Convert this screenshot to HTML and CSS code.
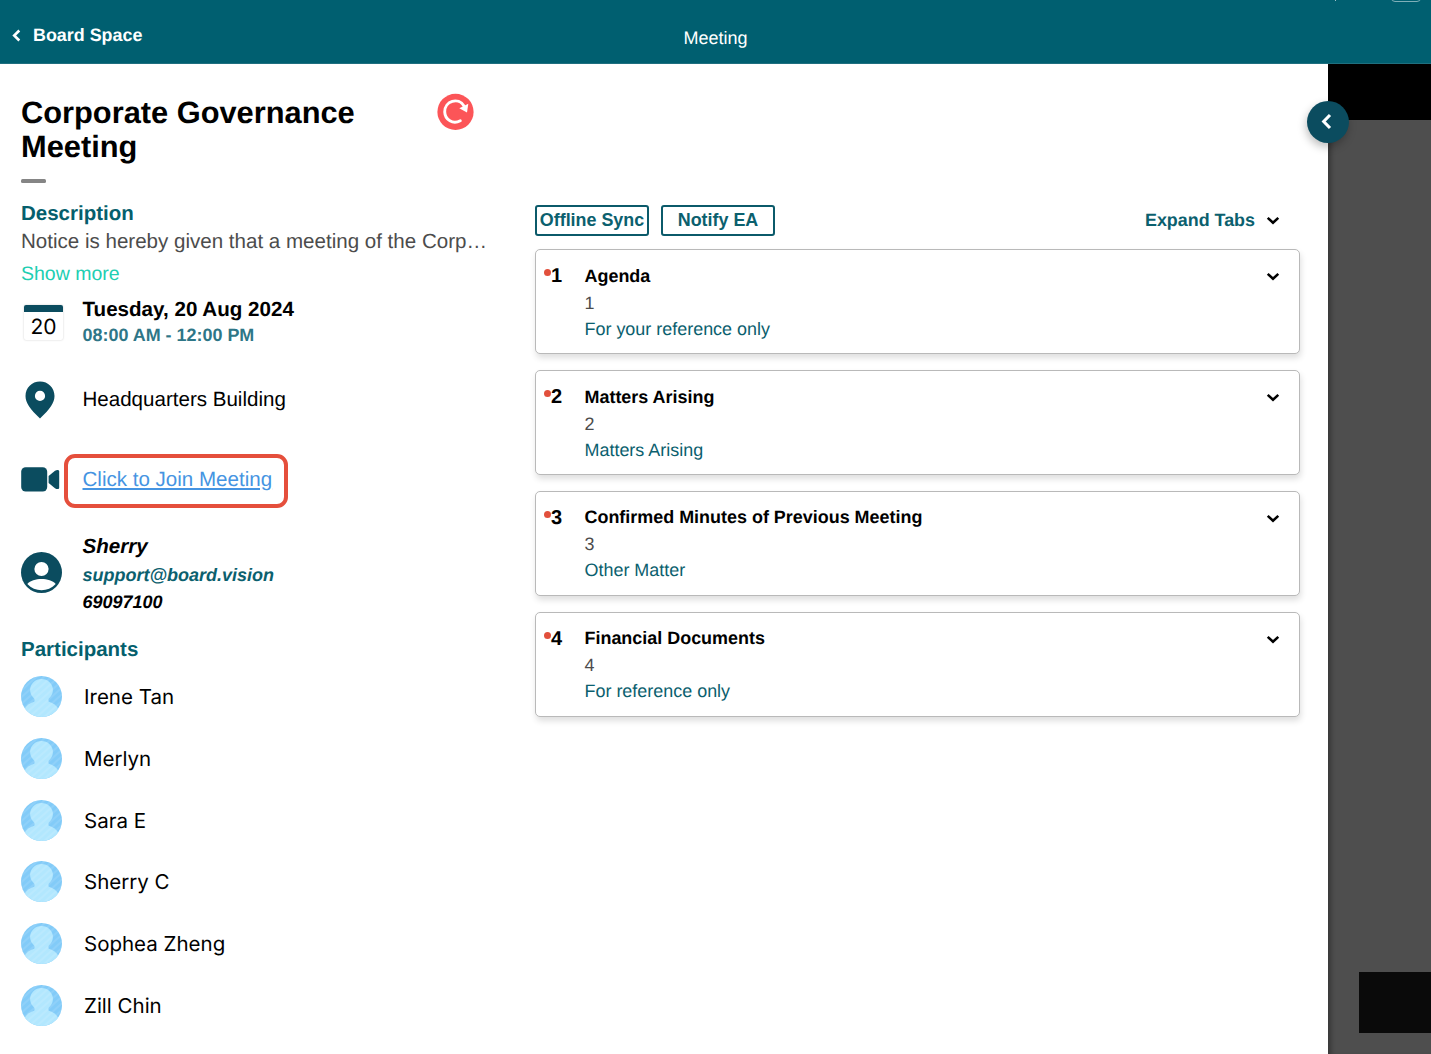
FILE: index.html
```html
<!DOCTYPE html>
<html lang="en">
<head>
<meta charset="utf-8">
<title>Meeting</title>
<link rel="stylesheet" href="styles.css">
</head>
<body>
<svg width="0" height="0" class="defs" aria-hidden="true">
  <defs>
    <clipPath id="round"><circle cx="20.5" cy="20.5" r="20.5"/></clipPath>
    <pattern id="hatch" width="5" height="5" patternUnits="userSpaceOnUse" patternTransform="rotate(-42)">
      <path d="M0 1H5" stroke="#fff" stroke-opacity=".2" stroke-width="1"/>
    </pattern>
    <symbol id="avatar" viewBox="0 0 41 41">
      <g clip-path="url(#round)">
        <rect width="41" height="41" fill="#82cbf8"/>
        <g fill="#b2e7fe">
          <ellipse cx="20.500" cy="14" rx="11.400" ry="11"/>
          <rect x="13.500" y="19" width="14" height="9"/>
          <ellipse cx="20.500" cy="37.500" rx="18" ry="13"/>
        </g>
        <rect width="41" height="41" fill="url(#hatch)"/>
      </g>
    </symbol>
    <symbol id="chevron" viewBox="0 0 14 9">
      <path d="M1.700 1.900L7 6.700L12.300 1.900" fill="none" stroke="#000" stroke-width="2.600"/>
    </symbol>
  </defs>
</svg>

<header class="topbar">
  <a class="back"><svg width="9" height="13" viewBox="0 0 9 13"><path d="M7.300 1.500L2.200 6.500L7.300 11.500" fill="none" stroke="#fff" stroke-width="2.600"/></svg>Board Space</a>
  <span class="topbar-title">Meeting</span>
  <i class="battery"></i><i class="signal"></i>
</header>

<div class="body">
  <main class="sheet">
    <section class="info">
      <div class="title-row">
        <h1>Corporate Governance Meeting</h1>
        <svg class="refresh" width="37" height="37" viewBox="0 0 37 37">
          <circle cx="18.500" cy="18.900" r="18.100" fill="#fc5558"/>
          <path d="M23.300 27.700C16 31.700 8 26.900 7.700 18.900C7.600 7.900 21.500 3.900 27 12.900" fill="none" stroke="#fff" stroke-width="2.900" stroke-linecap="round"/>
          <path d="M22.300 15.300L31.300 10.800L30 19.600Z" fill="#fff"/>
        </svg>
      </div>
      <div class="dash"></div>
      <h2 class="desc-title">Description</h2>
      <p class="desc">Notice is hereby given that a meeting of the Corp…</p>
      <a class="more">Show more</a>

      <div class="row row-date">
        <div class="icon"><div class="calendar">20</div></div>
        <div>
          <div class="date">Tuesday, 20 Aug 2024</div>
          <div class="time">08:00 AM - 12:00 PM</div>
        </div>
      </div>
      <div class="row row-place">
        <div class="icon"><svg class="pin" width="30" height="38" viewBox="0 0 30 38"><path fill-rule="evenodd" d="M15 .5C6.800 .5 .5 6.800 .5 15C.5 21.800 5 28 15 37.500C25 28 29.500 21.800 29.500 15C29.500 6.800 23.200 .5 15 .5ZM15 9.800A5.100 5.100 0 1 1 15 20A5.100 5.100 0 1 1 15 9.800Z" fill="#0b4c5f"/></svg></div>
        <span class="place">Headquarters Building</span>
      </div>
      <div class="row row-join">
        <div class="icon"><svg width="39" height="25" viewBox="0 0 39 25"><rect x=".2" y=".3" width="26" height="24.200" rx="4.500" fill="#0b4c5f"/><path d="M27.600 9L34 3.800C36 2.500 38.200 2.500 38.200 4.500V20.500C38.200 22.500 36 22.500 34 21.200L27.600 16Z" fill="#0b4c5f"/></svg></div>
        <a class="join">Click to Join Meeting</a>
        <div class="highlight"></div>
      </div>
      <div class="row row-contact">
        <div class="icon"><svg width="41" height="41" viewBox="0 0 41 41"><circle cx="20.500" cy="20.500" r="20.500" fill="#0b4c5f"/><circle cx="20.500" cy="17" r="7.100" fill="#fff"/><path d="M6.300 32C12 25.300 29 25.300 34.700 32C27 40.300 14 40.300 6.300 32Z" fill="#fff"/></svg></div>
        <div class="contact">
          <div class="person">Sherry</div>
          <div class="mail">support@board.vision</div>
          <div class="phone">69097100</div>
        </div>
      </div>

      <h2 class="people-title">Participants</h2>
      <ul class="people">
        <li><svg><use href="#avatar"/></svg>Irene Tan</li>
        <li><svg><use href="#avatar"/></svg>Merlyn</li>
        <li><svg><use href="#avatar"/></svg>Sara E</li>
        <li><svg><use href="#avatar"/></svg>Sherry C</li>
        <li><svg><use href="#avatar"/></svg>Sophea Zheng</li>
        <li><svg><use href="#avatar"/></svg>Zill Chin</li>
      </ul>
    </section>

    <section class="tabs">
      <div class="toolbar">
        <button>Offline Sync</button>
        <button>Notify EA</button>
        <a class="expand">Expand Tabs<svg class="chev"><use href="#chevron"/></svg></a>
      </div>
      <article class="card">
        <div class="num">1</div>
        <div class="text"><h3>Agenda</h3><p>1</p><p class="note">For your reference only</p></div>
        <svg class="chev"><use href="#chevron"/></svg>
      </article>
      <article class="card">
        <div class="num">2</div>
        <div class="text"><h3>Matters Arising</h3><p>2</p><p class="note">Matters Arising</p></div>
        <svg class="chev"><use href="#chevron"/></svg>
      </article>
      <article class="card">
        <div class="num">3</div>
        <div class="text"><h3>Confirmed Minutes of Previous Meeting</h3><p>3</p><p class="note">Other Matter</p></div>
        <svg class="chev"><use href="#chevron"/></svg>
      </article>
      <article class="card">
        <div class="num">4</div>
        <div class="text"><h3>Financial Documents</h3><p>4</p><p class="note">For reference only</p></div>
        <svg class="chev"><use href="#chevron"/></svg>
      </article>
    </section>
  </main>
  <aside class="behind">
    <div class="behind-top"></div>
    <div class="behind-block"></div>
    <div class="toggle"><svg width="11" height="17" viewBox="0 0 11 17"><path d="M9 2L2.700 8.500L9 15" fill="none" stroke="#fff" stroke-width="3.100"/></svg></div>
  </aside>
</div>
</body>
</html>
```
FILE: styles.css
```css
* { box-sizing: border-box; }
body {
  margin: 0;
  height: 1054px;
  overflow: hidden;
  display: flex;
  flex-direction: column;
  background: #fff;
  color: #000;
  font-family: "Liberation Sans", Arial, sans-serif;
  font-variant-ligatures: none;
  text-rendering: geometricPrecision;
}
h1, h2, h3, p, ul { margin: 0; padding: 0; }
svg { display: block; flex: none; }
.defs { position: absolute; }

.topbar {
  position: relative;
  flex: none;
  height: 64px;
  background: #005f70;
  border-bottom: 1px solid #1f6f7f;
  color: #fff;
  display: grid;
  grid-template-columns: 1fr auto 1fr;
}
.back {
  display: flex;
  align-items: center;
  gap: 12px;
  height: 24px;
  margin: 23px 0 0 12px;
  font-size: 17.900px;
  font-weight: 700;
}
.topbar-title {
  margin-top: 26px;
  line-height: 24px;
  font-size: 18px;
}
.battery {
  position: absolute;
  top: -10px;
  left: 1391px;
  width: 30px;
  height: 12px;
  border: 1px solid #7fafb8;
  border-radius: 4px;
}
.signal {
  position: absolute;
  top: 0;
  left: 1335px;
  width: 1px;
  height: 1px;
  background: #9fc3c9;
}

.body { flex: 1; display: flex; }
.sheet { width: 1328px; flex: none; display: flex; gap: 21px; background: #fff; }
.info { width: 514px; padding: 32px 0 0 21px; }

.title-row { display: flex; align-items: flex-start; height: 69px; }
h1 {
  width: 416px;
  padding-right: 60px;
  font-size: 30.800px;
  line-height: 34px;
}
.refresh { margin-top: -3px; }
.dash {
  width: 25px;
  height: 4px;
  margin-top: 14px;
  border-radius: 1.500px;
  background: #858585;
}
h2 {
  font-size: 20.500px;
  line-height: 24px;
  color: #055f6d;
}
.desc-title { margin-top: 19px; }
.desc {
  margin-top: 2px;
  white-space: nowrap;
  font-size: 20.550px;
  line-height: 28px;
  color: #4c4c4c;
}
.more {
  display: block;
  margin-top: 6px;
  font-size: 19.500px;
  line-height: 24px;
  color: #20ceb2;
}

.row { position: relative; display: flex; align-items: center; }
.icon { width: 61.500px; flex: none; }
.row-date { margin-top: 11px; height: 51px; }
.calendar {
  width: 39px;
  height: 35px;
  margin: 0 0 0 3px;
  border-top: 7px solid #0b4c5f;
  border-radius: 2px;
  box-shadow: 0 0 2px rgba(0, 0, 0, .22);
  font: 21px/31px Inter, sans-serif;
  text-align: center;
}
.date { font-size: 20.600px; font-weight: 700; line-height: 26px; }
.time { font-size: 17.950px; font-weight: 700; line-height: 25px; color: #2e7687; }
.row-place { margin-top: 32px; height: 40px; }
.pin { margin-left: 4px; }
.place { font-size: 20.550px; }
.row-join { margin-top: 40px; height: 39px; }
.join {
  font-size: 20.550px;
  color: #4594e2;
  text-decoration: underline;
  text-decoration-thickness: 1.500px;
  text-underline-offset: 2px;
}
.highlight {
  position: absolute;
  left: 43px;
  top: -6px;
  width: 224px;
  height: 54px;
  border: 4px solid #e54f3c;
  border-radius: 11px;
}
.row-contact { margin-top: 34px; font-weight: 700; font-style: italic; }
.row-contact .icon { padding-bottom: 5px; }
.person { font-size: 20.600px; line-height: 28px; margin-bottom: 1px; }
.mail { font-size: 18px; line-height: 26px; color: #0b606e; }
.phone { font-size: 18px; line-height: 28px; }

.people-title { margin-top: 22px; }
.people {
  list-style: none;
  display: flex;
  flex-direction: column;
  gap: 20.750px;
  margin-top: 14px;
}
.people li {
  display: flex;
  align-items: center;
  gap: 22px;
  height: 41px;
  font: 20.500px/23px Inter, sans-serif;
}
.people svg { width: 41px; height: 41px; }

.tabs {
  width: 765px;
  margin-top: 141px;
  display: flex;
  flex-direction: column;
  gap: 15.900px;
}
.toolbar { display: flex; align-items: center; gap: 12px; height: 31px; margin-bottom: -2.500px; }
.toolbar button {
  width: 114px;
  height: 31px;
  padding: 0 0 1px;
  border: 2px solid #0b5a6a;
  border-radius: 3px;
  background: #fff;
  color: #0b606e;
  font: 700 17.900px/23px "Liberation Sans", Arial, sans-serif;
  white-space: nowrap;
}
.expand {
  display: flex;
  align-items: center;
  gap: 11px;
  margin: 0 20px 0 auto;
  font-size: 17.900px;
  font-weight: 700;
  color: #0b606e;
}
.chev { width: 14px; height: 9px; }

.card {
  display: flex;
  height: 105px;
  padding: 13px 19px 0 8px;
  border: 1px solid #b9b9b9;
  border-radius: 5px;
  background: #fff;
  box-shadow: 1px 4px 6px rgba(0, 0, 0, .13);
}
.num {
  display: flex;
  width: 40.500px;
  font-size: 20px;
  font-weight: 700;
  line-height: 26px;
}
.num::before {
  content: "";
  width: 7px;
  height: 7px;
  margin-top: 6px;
  border-radius: 50%;
  background: #e2503c;
}
.text { flex: 1; margin-top: -.700px; font-size: 17.950px; }
.text h3 { font-size: 17.970px; line-height: 26px; }
.text p { line-height: 26px; margin-top: 1px; color: #4c4c4c; }
.text .note { margin-top: 0; color: #0b606e; }
.card .chev { margin-top: 9px; }

.behind { position: relative; flex: 1; background: #4e4e4e; box-shadow: inset 6px 0 5px -3px rgba(0, 0, 0, .3); }
.behind-top { height: 56px; background: #000; }
.behind-block { margin: 852px 0 0 31px; height: 61px; background: #0a0a0a; }
.toggle {
  position: absolute;
  left: -21px;
  top: 37px;
  width: 42px;
  height: 42px;
  border-radius: 50%;
  background: #0b4c5f;
  box-shadow: -1px 4px 8px rgba(0, 0, 0, .25);
  display: flex;
  align-items: center;
  justify-content: center;
  padding: 0 3px 1px 0;
}
```
